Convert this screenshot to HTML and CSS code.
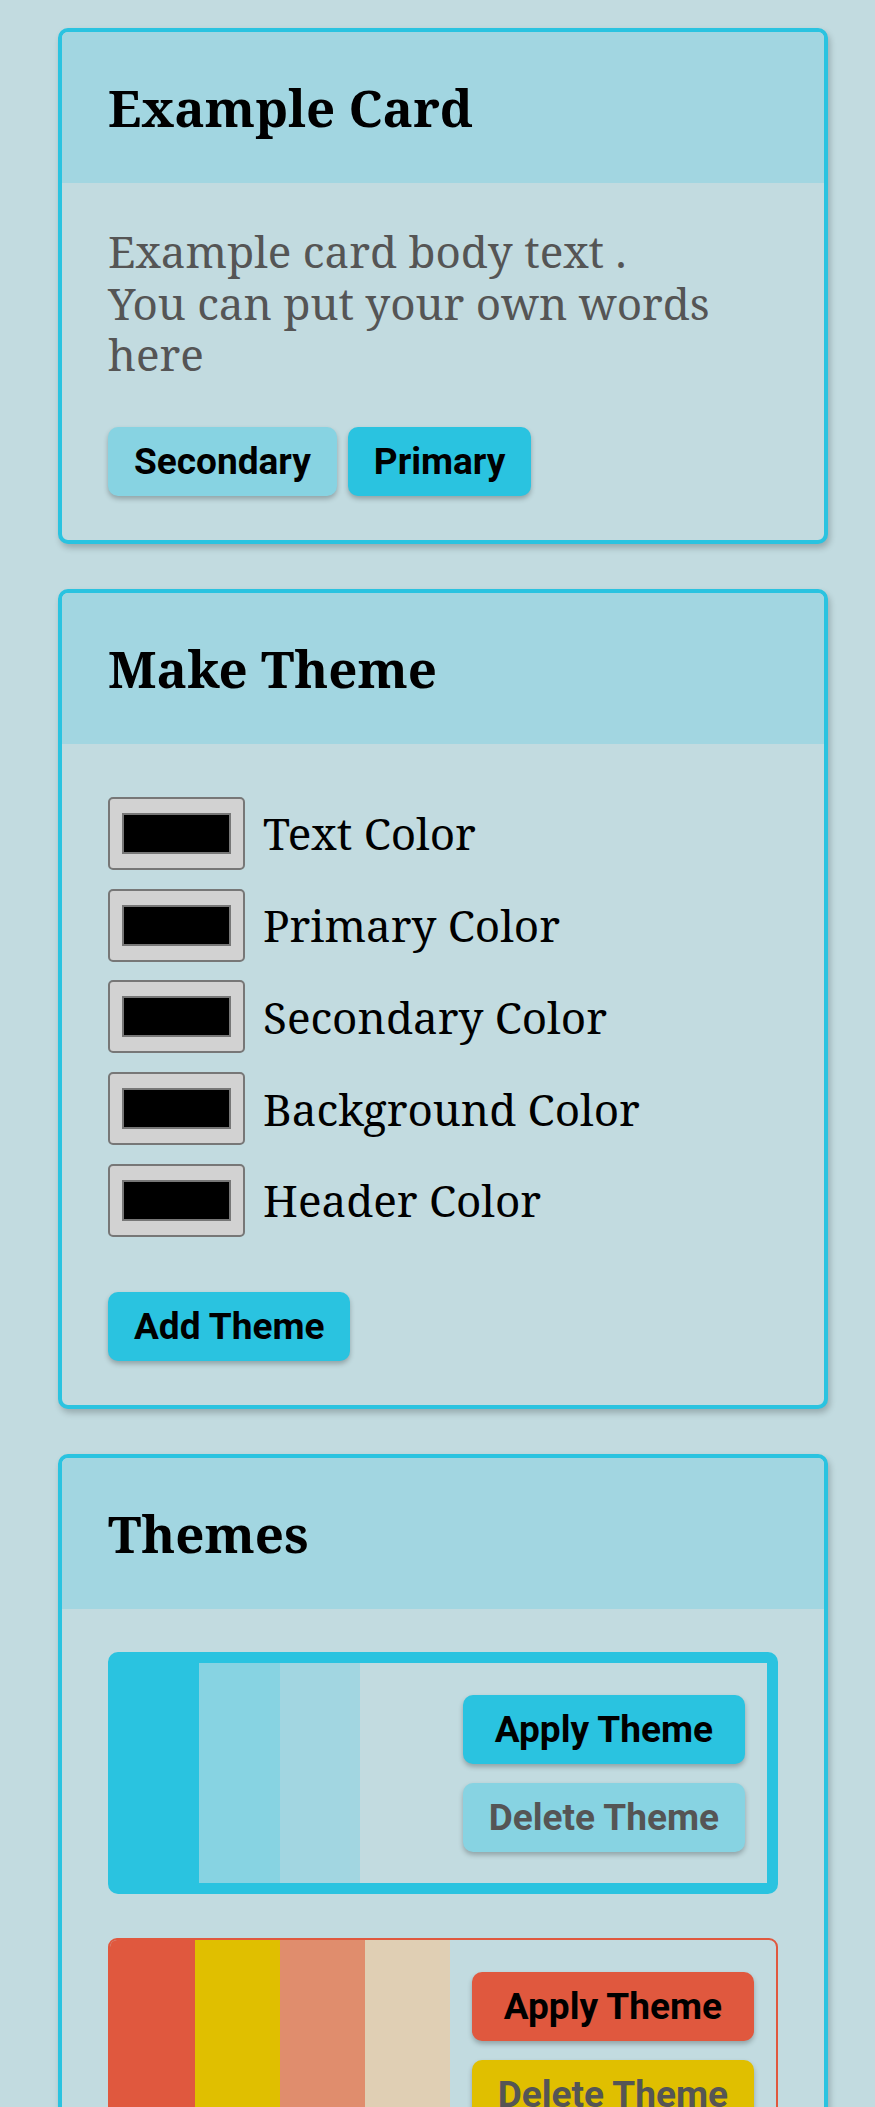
FILE: index.html
```html
<!DOCTYPE html>
<html lang="en">
<head>
<meta charset="utf-8">
<title>Theme Maker</title>
<link rel="stylesheet" href="styles.css">
</head>
<body>
<main class="page">
  <section class="card">
    <header class="card-header"><h2 class="card-title">Example Card</h2></header>
    <div class="card-body">
      <p class="card-text">Example card body text .<br>You can put your own words here</p>
      <div class="btn-row">
        <button class="btn btn-secondary">Secondary</button>
        <button class="btn btn-primary">Primary</button>
      </div>
    </div>
  </section>

  <section class="card">
    <header class="card-header"><h2 class="card-title">Make Theme</h2></header>
    <div class="card-body">
      <form class="theme-form">
        <div class="fields">
          <label class="field"><input class="color-input" type="color" value="#000000"><span class="field-label">Text Color</span></label>
          <label class="field"><input class="color-input" type="color" value="#000000"><span class="field-label">Primary Color</span></label>
          <label class="field"><input class="color-input" type="color" value="#000000"><span class="field-label">Secondary Color</span></label>
          <label class="field"><input class="color-input" type="color" value="#000000"><span class="field-label">Background Color</span></label>
          <label class="field"><input class="color-input" type="color" value="#000000"><span class="field-label">Header Color</span></label>
        </div>
        <button type="button" class="btn btn-primary btn-add">Add Theme</button>
      </form>
    </div>
  </section>

  <section class="card">
    <header class="card-header"><h2 class="card-title">Themes</h2></header>
    <div class="card-body themes-body">
      <div class="theme theme-active theme-blue">
        <div class="swatches">
          <span class="strip strip-blue-1"></span>
          <span class="strip strip-blue-2"></span>
          <span class="strip strip-blue-3"></span>
          <span class="strip strip-blue-4"></span>
        </div>
        <div class="theme-actions">
          <button class="btn btn-apply-blue">Apply Theme</button>
          <button class="btn btn-delete-blue">Delete Theme</button>
        </div>
      </div>

      <div class="theme theme-red">
        <div class="swatches">
          <span class="strip strip-red-1"></span>
          <span class="strip strip-red-2"></span>
          <span class="strip strip-red-3"></span>
          <span class="strip strip-red-4"></span>
        </div>
        <div class="theme-actions">
          <button class="btn btn-apply-red">Apply Theme</button>
          <button class="btn btn-delete-red">Delete Theme</button>
        </div>
      </div>
    </div>
  </section>
</main>
</body>
</html>
```
FILE: styles.css
```css
html, body {
  margin: 0;
  padding: 0;
}

body {
  background: #c2dbe0;
  font-family: "Noto Serif", "DejaVu Serif", serif;
  color: #000;
}

.page {
  padding: 28px 0 40px 58px;
}

.card {
  width: 770px;
  box-sizing: border-box;
  border: 4px solid #2ac3e0;
  border-radius: 10px;
  background: #c2dbe0;
  box-shadow: 2px 4px 6px rgba(0, 0, 0, 0.22);
  overflow: hidden;
  margin-bottom: 45px;
}

.card-header {
  background: #a2d6e1;
  height: 151px;
  box-sizing: border-box;
  padding: 0 46px;
  display: flex;
  align-items: center;
}

.card-title {
  margin: 0;
  font-size: 51px;
  font-weight: 700;
  line-height: 1.2;
}

.card-body {
  padding: 43px 46px 44px;
}

.card-text {
  margin: 0 0 46px;
  font-size: 44px;
  line-height: 51.6px;
  color: #555;
}

.btn-row {
  display: flex;
  gap: 11px;
}

.btn {
  font-family: Roboto, "Liberation Sans", sans-serif;
  font-weight: 700;
  font-size: 37px;
  line-height: 41px;
  padding: 14px 26px;
  border: none;
  border-radius: 10px;
  color: #000;
  box-shadow: 0 3px 5px rgba(0, 0, 0, 0.25);
  cursor: pointer;
}

.btn-primary {
  background: #2ac3e0;
}

.btn-secondary {
  background: #87d3e2;
}

/* Make theme form */
.theme-form {
  padding-top: 10px;
}

.fields {
  display: flex;
  flex-direction: column;
  gap: 18.75px;
}

.field {
  display: flex;
  align-items: center;
}

.color-input {
  -webkit-appearance: none;
  appearance: none;
  width: 137px;
  height: 73px;
  box-sizing: border-box;
  padding: 0;
  margin: 0;
  border: 2px solid #777;
  border-radius: 5px;
  background: #d2d2d2;
}

.color-input::-webkit-color-swatch-wrapper {
  padding: 14px 12px;
}

.color-input::-webkit-color-swatch {
  border: 2px solid #777;
  border-radius: 0;
}

.field-label {
  margin-left: 18px;
  font-size: 44px;
  color: #000;
}

.btn-add {
  margin-top: 55px;
}

/* Themes list */
.themes-body {
  display: flex;
  flex-direction: column;
  gap: 44px;
  padding-top: 43px;
}

.theme {
  display: flex;
  border-radius: 10px;
  overflow: hidden;
}

.theme-blue {
  border: 11px solid #2ac3e0;
}

.theme-red {
  border: 2px solid #e0583e;
  border-radius: 9px;
}

.swatches {
  display: flex;
  flex: 1;
}

.strip {
  flex: 1;
}

.strip-blue-1 { background: #2ac3e0; }
.strip-blue-2 { background: #87d3e2; }
.strip-blue-3 { background: #a2d6e1; }
.strip-blue-4 { background: #c2dbe0; }

.strip-red-1 { background: #e0583e; }
.strip-red-2 { background: #e0bf00; }
.strip-red-3 { background: #e08d6d; }
.strip-red-4 { background: #e0cfb4; }

.theme-actions {
  display: flex;
  flex-direction: column;
  gap: 19px;
  padding: 32px 22px 31px;
}

.btn-apply-blue { background: #2ac3e0; color: #000; }
.btn-delete-blue { background: #87d3e2; color: #555; }
.btn-apply-red { background: #e0583e; color: #000; }
.btn-delete-red { background: #e0bf00; color: #555; }
```
